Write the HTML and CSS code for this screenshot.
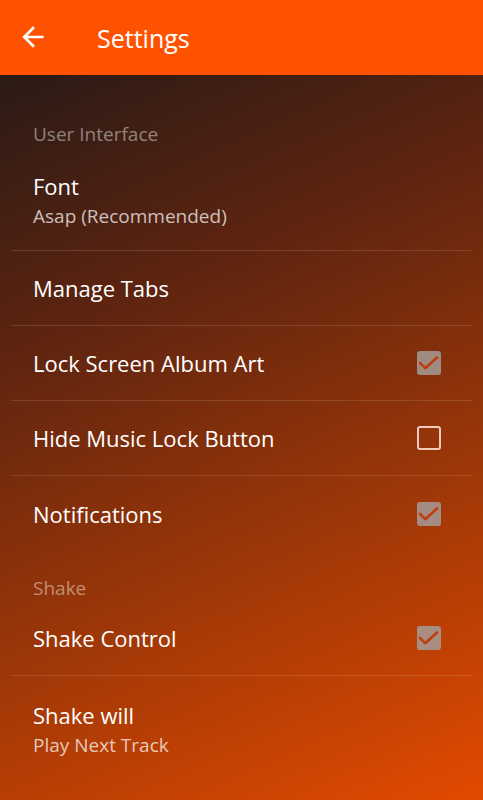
FILE: index.html
```html
<!DOCTYPE html>
<html lang="en">
<head>
    <meta charset="UTF-8">
    <meta name="viewport" content="width=device-width, initial-scale=1.0">
    <title>Settings</title>
    <link rel="stylesheet" href="styles.css">
</head>
<body>

    <div id="app">
        <!-- Toolbar -->
        <div class="toolbar">
            <svg class="back-icon" viewBox="0 0 24 24" width="32" height="32">
                <path fill="#fff" d="M20 11H7.83l5.59-5.59L12 4l-8 8 8 8 1.41-1.41L7.83 13H20v-2z"/>
            </svg>
            <span class="toolbar-title">Settings</span>
        </div>

        <!-- Preference list -->
        <div class="pref-list">
            <div class="pref-category">User Interface</div>

            <div class="pref two-line">
                <div class="pref-text">
                    <div class="pref-title">Font</div>
                    <div class="pref-summary">Asap (Recommended)</div>
                </div>
            </div>

            <div class="pref">
                <div class="pref-text">
                    <div class="pref-title">Manage Tabs</div>
                </div>
            </div>

            <div class="pref">
                <div class="pref-text">
                    <div class="pref-title">Lock Screen Album Art</div>
                </div>
                <span class="checkbox checked">
                    <svg viewBox="0 0 24 24" width="24" height="24"><polyline points="3,12 8.2,17.2 20,6.5"/></svg>
                </span>
            </div>

            <div class="pref">
                <div class="pref-text">
                    <div class="pref-title">Hide Music Lock Button</div>
                </div>
                <span class="checkbox"></span>
            </div>

            <div class="pref last">
                <div class="pref-text">
                    <div class="pref-title">Notifications</div>
                </div>
                <span class="checkbox checked">
                    <svg viewBox="0 0 24 24" width="24" height="24"><polyline points="3,12 8.2,17.2 20,6.5"/></svg>
                </span>
            </div>

            <div class="pref-category">Shake</div>

            <div class="pref">
                <div class="pref-text">
                    <div class="pref-title">Shake Control</div>
                </div>
                <span class="checkbox checked">
                    <svg viewBox="0 0 24 24" width="24" height="24"><polyline points="3,12 8.2,17.2 20,6.5"/></svg>
                </span>
            </div>

            <div class="pref two-line last">
                <div class="pref-text">
                    <div class="pref-title">Shake will</div>
                    <div class="pref-summary">Play Next Track</div>
                </div>
            </div>
        </div>
    </div>

</body>
</html>
```

FILE: styles.css
```css
html, body {
    height: 100%;
}

body {
    font-family: "Open Sans", "Noto Sans", sans-serif;
    margin: 0;
    padding: 0;
    background-color: #2a1a16;
    color: #fff;
}

#app {
    height: 100%;
    display: flex;
    flex-direction: column;
}

.toolbar {
    height: 75px;
    flex-shrink: 0;
    background-color: #ff5200;
    display: flex;
    align-items: center;
    padding-left: 17px;
    box-sizing: border-box;
}

.back-icon {
    display: block;
    margin-top: -1px;
}

.toolbar-title {
    margin-left: 48px;
    font-size: 25px;
    line-height: 32px;
    margin-top: 1px;
}

.pref-list {
    flex: 1;
    padding-top: 22px;
    background: linear-gradient(156deg, #2a1a16 0%, #5e2410 30%, #9a3608 62%, #e24a00 100%);
}

.pref-category {
    padding: 26px 33px 2px;
    font-size: 19px;
    line-height: 22px;
    color: rgba(255, 255, 255, 0.45);
}

.pref {
    margin: 0 11px;
    padding: 0 22px;
    height: 75px;
    box-sizing: border-box;
    display: flex;
    align-items: center;
    border-bottom: 1px solid rgba(255, 255, 255, 0.13);
}

.pref.two-line {
    height: auto;
    padding-top: 24px;
    padding-bottom: 19px;
}

.pref.last {
    border-bottom: none;
}

.pref-text {
    flex: 1;
}

.pref-title {
    font-size: 22px;
    line-height: 30px;
}

.pref-summary {
    font-size: 19px;
    line-height: 30px;
    color: rgba(255, 255, 255, 0.72);
}

.checkbox {
    width: 24px;
    height: 24px;
    box-sizing: border-box;
    border: 2.5px solid rgba(255, 228, 218, 0.85);
    border-radius: 3px;
    margin-right: 9px;
}

.checkbox.checked {
    border: none;
    background-color: rgba(165, 155, 152, 0.85);
}

.checkbox svg {
    display: block;
}

.checkbox polyline {
    fill: none;
    stroke: #bf3e0e;
    stroke-width: 2.6;
    stroke-linecap: round;
    stroke-linejoin: round;
}
```
